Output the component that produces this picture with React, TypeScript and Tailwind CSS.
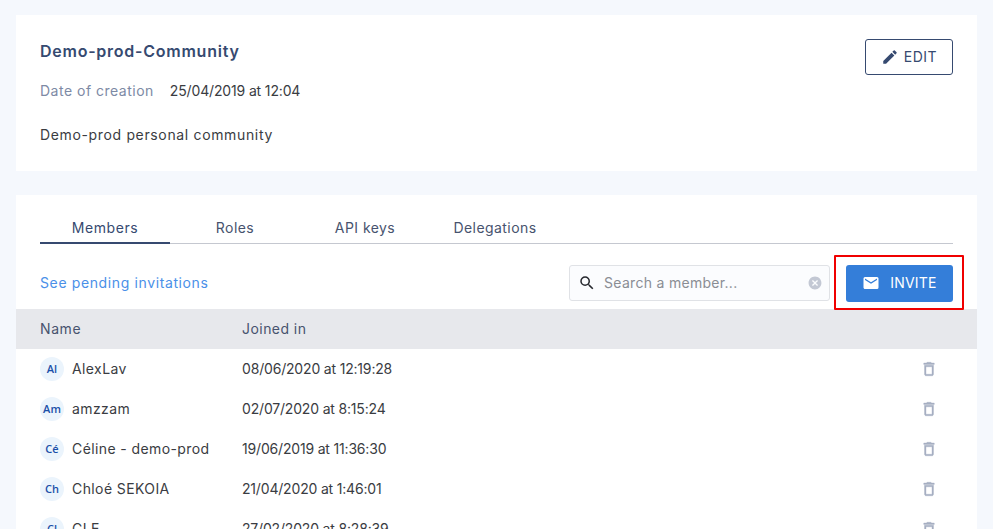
const rows = [
  ["Al", "AlexLav", "08/06/2020 at 12:19:28"],
  ["Am", "amzzam", "02/07/2020 at 8:15:24"],
  ["Cé", "Céline - demo-prod", "19/06/2019 at 11:36:30"],
  ["Ch", "Chloé SEKOIA", "21/04/2020 at 1:46:01"],
  ["Cl", "CLE", "27/02/2020 at 8:28:39"],
];

function Trash() {
  return (
    <svg width="18" height="18" viewBox="0 0 24 24" fill="#a6afc2" stroke="#a6afc2" strokeWidth="0.5">
      <path d="M6 19c0 1.1.9 2 2 2h8c1.1 0 2-.9 2-2V7H6v12zM8 9h8v10H8V9zm7.5-5l-1-1h-5l-1 1H5v2h14V4h-3.5z" />
    </svg>
  );
}

export default function App() {
  return (
    <div className="h-[529px] overflow-hidden bg-[#f5f8fd] px-4 pt-[15px] text-[14px] text-[#3a3c42] font-['Inter','Open_Sans',sans-serif]">
      <section className="h-[156px] bg-white px-6 pt-6 flex justify-between">
        <div>
          <h1 className="text-[16px] leading-6 font-semibold text-[#364a70] tracking-[0.75px]">Demo-prod-Community</h1>
          <div className="mt-[18px] flex gap-4 leading-5">
            <span className="text-[#7d8aa5] tracking-[0.5px]">Date of creation</span>
            <span className="tracking-[-0.15px]">25/04/2019 at 12:04</span>
          </div>
          <p className="mt-6 leading-5 tracking-[0.65px]">Demo-prod personal community</p>
        </div>
        <button className="h-9 w-[88px] rounded-[3px] border border-[#364a70] text-[#364a70] flex items-center justify-center gap-[5px]">
          <svg width="18" height="18" viewBox="0 0 24 24" fill="#364a70">
            <path d="M3 17.25V21h3.75L17.81 9.94l-3.75-3.75L3 17.25zM20.71 7.04a1 1 0 0 0 0-1.41l-2.34-2.34a1 1 0 0 0-1.41 0l-1.83 1.83 3.75 3.75 1.83-1.83z" />
          </svg>
          <span className="pb-0.5 tracking-[0.5px]">EDIT</span>
        </button>
      </section>

      <section className="relative mt-6 bg-white h-[400px]">
        <div className="mx-6 pt-[21px] border-b border-[#c5c8d0] flex h-[49px] text-[#47536e]">
          {["Members", "Roles", "API keys", "Delegations"].map((t, i) => (
            <div
              key={t}
              className={
                i === 0
                  ? "w-[130px] h-[28px] text-center leading-6 border-b-2 border-[#364a70] text-[#364a70] tracking-[0.6px]"
                  : "w-[130px] h-[28px] text-center leading-6 tracking-[0.45px]"
              }
            >
              {t}
            </div>
          ))}
        </div>

        <div className="mx-6 mt-[21px] h-[36px] flex items-center justify-between">
          <a className="text-[#4a90e8] tracking-[0.62px] pb-0.5">See pending invitations</a>
          <div className="flex items-center gap-4">
            <div className="w-[261px] h-9 rounded-[3px] border border-[#e0e2e6] bg-[#fbfcfe] flex items-center pl-[8px] pr-[7px]">
              <svg width="18" height="18" viewBox="0 0 24 24" fill="#26282e">
                <path d="M15.5 14h-.79l-.28-.27A6.47 6.47 0 0 0 16 9.5 6.5 6.5 0 1 0 9.5 16c1.61 0 3.09-.59 4.23-1.57l.27.28v.79l5 4.99L20.49 19l-4.99-5zm-6 0C7.01 14 5 11.99 5 9.5S7.01 5 9.5 5 14 7.01 14 9.5 11.99 14 9.5 14z" />
              </svg>
              <span className="ml-2 flex-1 text-[#8a8d94] tracking-[0.3px] pb-0.5">Search a member...</span>
              <svg width="14" height="14" viewBox="0 0 24 24" fill="#c3c8d4">
                <path d="M12 1C5.9 1 1 5.9 1 12s4.9 11 11 11 11-4.9 11-11S18.1 1 12 1zm5.2 14.6-1.6 1.6-3.6-3.6-3.6 3.6-1.6-1.6 3.6-3.6-3.6-3.6 1.6-1.6 3.6 3.6 3.6-3.6 1.6 1.6-3.6 3.6 3.6 3.6z" />
              </svg>
            </div>
            <button className="w-[107px] h-[37px] rounded-[3px] bg-[#347ed9] text-white flex items-center justify-center gap-[10px]">
              <svg width="18" height="18" viewBox="0 0 24 24" fill="#ffffff">
                <path d="M20 4H4a2 2 0 0 0-2 2v12c0 1.1.9 2 2 2h16a2 2 0 0 0 2-2V6a2 2 0 0 0-2-2zm0 4-8 5-8-5V6l8 5 8-5v2z" />
              </svg>
              <span className="pb-0.5 tracking-[0.2px]">INVITE</span>
            </button>
          </div>
        </div>

        <div className="absolute left-[818px] top-[60px] w-[130px] h-[55px] border-2 border-[#f00000] rounded-[1px]" />

        <div className="mt-2 h-10 bg-[#e7e8ec] flex items-center px-6 text-[#47536e]">
          <span className="w-[202px] pb-0.5 tracking-[0.6px]">Name</span>
          <span className="pb-0.5 tracking-[0.45px]">Joined in</span>
        </div>

        {rows.map(([a, n, d]) => (
          <div key={n} className="h-10 flex items-center pl-6 pr-[39px]">
            <div className="w-[202px] flex items-center gap-2">
              <span className="w-6 h-6 rounded-full bg-[#ebf4fc] text-[#1a4fa8] flex items-center justify-center text-[11px] font-semibold font-['Open_Sans',sans-serif]">
                {a}
              </span>
              <span className="pb-0.5 tracking-[0.4px]">{n}</span>
            </div>
            <span className="flex-1 pb-0.5 tracking-[-0.18px]">{d}</span>
            <Trash />
          </div>
        ))}
      </section>
    </div>
  );
}
